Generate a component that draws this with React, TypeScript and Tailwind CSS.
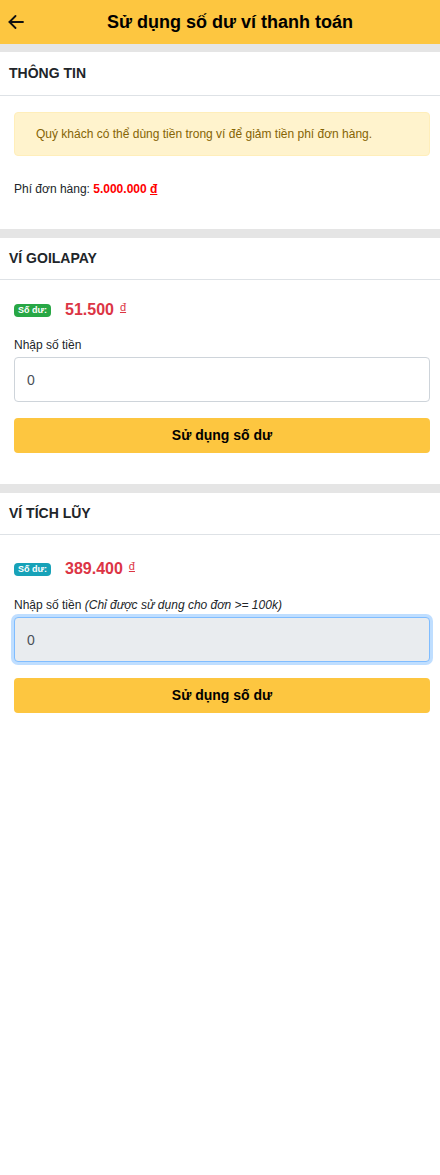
import React from 'react';

function BackArrow() {
  return (
    <svg width="16" height="14" viewBox="0 0 16 14" fill="none" stroke="#111" strokeWidth="1.8" strokeLinecap="round" strokeLinejoin="round">
      <path d="M15 7H1.5" />
      <path d="M7.5 1L1.5 7l6 6" />
    </svg>
  );
}

function SectionHeader({ title, tall }: { title: string; tall?: boolean }) {
  return (
    <div className={`${tall ? 'h-[44px]' : 'h-[42px]'} flex items-center border-b border-[#dee2e6] pl-[9px]`}>
      <h3 className="text-[14px] font-bold uppercase text-[#212529]">{title}</h3>
    </div>
  );
}

function Balance({ amount, color }: { amount: string; color: string }) {
  return (
    <div className="flex h-[24px] items-center">
      <span className={`${color} rounded-[4px] px-[4px] py-[1px] text-[9px] font-bold leading-[11px] text-white`}>Số dư:</span>
      <span className="ml-[14px] text-[16px] font-bold leading-[24px] text-[#dc3545]">{amount}</span>
      <span className="ml-[6px] mt-[3px] self-start text-[11px] leading-[12px] text-[#dc3545] underline">đ</span>
    </div>
  );
}

function Divider() {
  return <div className="h-[9px] bg-[#e5e5e5]" />;
}

export default function App() {
  return (
    <div className="min-h-[1175px] bg-white font-['Liberation_Sans',Arial,sans-serif] text-[#212529]">
      {/* Header */}
      <div className="flex h-[44px] items-center bg-[#fdc640]">
        <div className="flex w-[40px] items-center pl-[8px]">
          <BackArrow />
        </div>
        <h1 className="flex-1 pr-[20px] text-center text-[18px] font-bold text-black">Sử dụng số dư ví thanh toán</h1>
      </div>

      <div className="h-[8px] bg-[#e5e5e5]" />

      {/* Thông tin */}
      <SectionHeader title="Thông tin" tall />
      <div className="pb-[31px] pl-[14px] pr-[10px] pt-[16px]">
        <div className="flex h-[44px] items-center rounded-[4px] border border-[#ffeeba] bg-[#fff3cd] pl-[21px] text-[12px] text-[#856404]">
          Quý khách có thể dùng tiền trong ví để giảm tiền phí đơn hàng.
        </div>
        <p className="mt-[24px] text-[12px] leading-[18px]">
          Phí đơn hàng: <span className="font-bold text-[#ff0000]">5.000.000 <u>đ</u></span>
        </p>
      </div>

      <Divider />

      {/* Ví Goilapay */}
      <SectionHeader title="Ví Goilapay" />
      <div className="pb-[31px] pl-[14px] pr-[10px] pt-[18px]">
        <Balance amount="51.500" color="bg-[#28a745]" />
        <label className="mt-[14px] block text-[12px] leading-[18px]">Nhập số tiền</label>
        <input
          readOnly
          value="0"
          className="mt-[3px] block h-[45px] w-full rounded-[4px] border border-[#ced4da] bg-white px-[12px] text-[14px] text-[#495057] outline-none"
        />
        <button className="mt-[16px] h-[35px] w-full rounded-[4px] bg-[#fdc640] text-[14px] font-bold text-black">Sử dụng số dư</button>
      </div>

      <Divider />

      {/* Ví tích lũy */}
      <SectionHeader title="Ví tích lũy" />
      <div className="pb-[31px] pl-[14px] pr-[10px] pt-[22px]">
        <Balance amount="389.400" color="bg-[#17a2b8]" />
        <label className="mt-[15px] block text-[12px] leading-[18px]">
          Nhập số tiền <i>(Chỉ được sử dụng cho đơn &gt;= 100k)</i>
        </label>
        <input
          readOnly
          value="0"
          className="mt-[3px] block h-[45px] w-full rounded-[4px] border border-[#80bdff] bg-[#e9ecef] px-[12px] text-[14px] text-[#495057] shadow-[0_0_0_3px_rgba(0,123,255,0.25)] outline-none"
        />
        <button className="mt-[16px] h-[35px] w-full rounded-[4px] bg-[#fdc640] text-[14px] font-bold text-black">Sử dụng số dư</button>
      </div>
    </div>
  );
}
